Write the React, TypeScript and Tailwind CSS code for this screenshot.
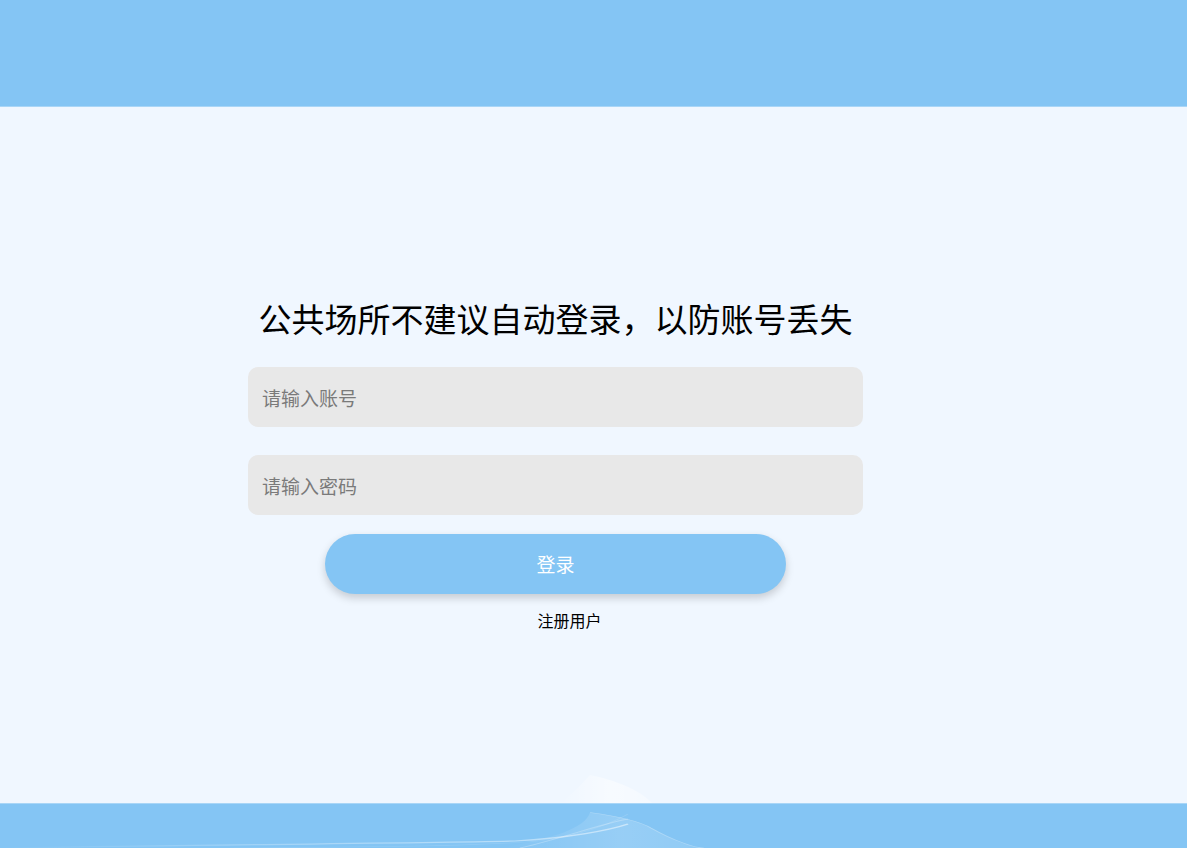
import React from 'react';

const font = { fontFamily: '"Noto Sans CJK SC", "Noto Sans", sans-serif' };

const Wave: React.FC = () => (
  <svg className="absolute inset-0 h-full w-full" viewBox="0 760 1187 88" preserveAspectRatio="none">
    <defs>
      <linearGradient id="wv" x1="0" y1="0" x2="1" y2="0">
        <stop offset="0" stopColor="#ffffff" stopOpacity="0" />
        <stop offset="0.5" stopColor="#ffffff" stopOpacity="0.3" />
        <stop offset="1" stopColor="#ffffff" stopOpacity="0.5" />
      </linearGradient>
      <linearGradient id="wf" x1="0" y1="0" x2="1" y2="0">
        <stop offset="0" stopColor="#ffffff" stopOpacity="0" />
        <stop offset="0.6" stopColor="#ffffff" stopOpacity="0.16" />
        <stop offset="1" stopColor="#ffffff" stopOpacity="0.1" />
      </linearGradient>
    </defs>
    <path d="M0 848 C200 842 430 838 515 834 C570 828 610 812 628 800" fill="none" stroke="url(#wv)" strokeWidth="2.5" />
    <path d="M230 848 C380 846 520 844 560 828 C595 812 615 795 628 780" fill="none" stroke="#ffffff" strokeOpacity="0.12" strokeWidth="1.5" />
    <path d="M520 848 C560 830 600 800 628 790" fill="none" stroke="#ffffff" strokeOpacity="0.25" strokeWidth="2" />
    <path d="M590 777 C620 785 640 795 651 808 C670 830 690 848 704 848 L500 848 C550 830 585 810 590 777 Z" fill="url(#wf)" />
    <path d="M590 777 C620 785 640 795 651 808 C675 835 695 848 704 848" fill="none" stroke="#ffffff" strokeOpacity="0.3" strokeWidth="1.5" />
  </svg>
);

const BottomTop: React.FC = () => (
  <svg className="absolute left-0 bottom-0 h-[40px] w-full" viewBox="0 763 1187 40" preserveAspectRatio="none">
    <defs>
      <linearGradient id="pk" x1="0" y1="0" x2="1" y2="0">
        <stop offset="0" stopColor="#ffffff" stopOpacity="0" />
        <stop offset="0.55" stopColor="#ffffff" stopOpacity="0.5" />
        <stop offset="1" stopColor="#ffffff" stopOpacity="0.3" />
      </linearGradient>
    </defs>
    <path d="M560 803 C575 792 585 780 590 775 C615 780 640 790 652 803 Z" fill="url(#pk)" />
  </svg>
);

export default function App() {
  return (
    <div className="flex h-screen w-full flex-col bg-[#f0f7ff]" style={font}>
      <div className="h-[107px] w-full bg-[#84c5f4] border-b border-[#a9d6f7]" />

      <div className="relative flex-1">
        <BottomTop />
        <div className="pl-[248px] pt-[187px]">
          <div className="flex w-[615px] flex-col items-center">
            <h1 className="text-[33px] leading-[48px] font-normal text-black whitespace-nowrap">
              公共场所不建议自动登录，以防账号丢失
            </h1>
            <input
              className="mt-[25px] h-[60px] w-full rounded-[10px] bg-[#e8e8e8] px-[14px] text-[19px] text-gray-800 outline-none placeholder:text-[#7a7a7a]"
              placeholder="请输入账号"
            />
            <input
              type="password"
              className="mt-[28px] h-[60px] w-full rounded-[10px] bg-[#e8e8e8] px-[14px] text-[19px] text-gray-800 outline-none placeholder:text-[#7a7a7a]"
              placeholder="请输入密码"
            />
            <button className="mt-[19px] h-[60px] w-[461px] rounded-full bg-[#84c5f4] text-[19px] text-white shadow-[0_4px_8px_rgba(0,0,0,0.18)]">
              登录
            </button>
            <a className="mt-[14px] ml-[28px] text-[16px] leading-6 text-black cursor-pointer">注册用户</a>
          </div>
        </div>
      </div>

      <div className="relative h-[45px] w-full overflow-hidden bg-[#84c5f4] border-t border-[#a9d6f7]">
        <Wave />
      </div>
    </div>
  );
}
